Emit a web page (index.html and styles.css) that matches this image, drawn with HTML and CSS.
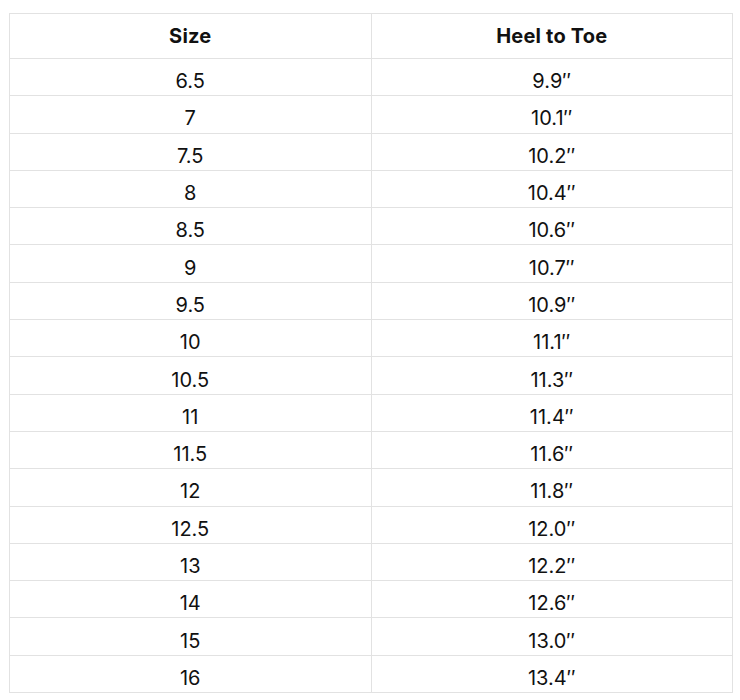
FILE: index.html
```html
<!DOCTYPE html>
<html>
<head>
<meta charset="utf-8">
<link rel="stylesheet" href="styles.css">
</head>
<body>
<table class="size-table">
  <thead>
    <tr><th>Size</th><th>Heel to Toe</th></tr>
  </thead>
  <tbody>
    <tr><td>6.5</td><td>9.9″</td></tr>
    <tr><td>7</td><td>10.1″</td></tr>
    <tr><td>7.5</td><td>10.2″</td></tr>
    <tr><td>8</td><td>10.4″</td></tr>
    <tr><td>8.5</td><td>10.6″</td></tr>
    <tr><td>9</td><td>10.7″</td></tr>
    <tr><td>9.5</td><td>10.9″</td></tr>
    <tr><td>10</td><td>11.1″</td></tr>
    <tr><td>10.5</td><td>11.3″</td></tr>
    <tr><td>11</td><td>11.4″</td></tr>
    <tr><td>11.5</td><td>11.6″</td></tr>
    <tr><td>12</td><td>11.8″</td></tr>
    <tr><td>12.5</td><td>12.0″</td></tr>
    <tr><td>13</td><td>12.2″</td></tr>
    <tr><td>14</td><td>12.6″</td></tr>
    <tr><td>15</td><td>13.0″</td></tr>
    <tr><td>16</td><td>13.4″</td></tr>
  </tbody>
</table>
</body>
</html>
```
FILE: styles.css
```css
html, body {
  margin: 0;
  padding: 0;
  background: #ffffff;
}
body {
  padding: 13px 0 0 9px;
  font-family: "Inter", "Liberation Sans", sans-serif;
  color: #111111;
}
.size-table {
  border-collapse: collapse;
  width: 724px;
  table-layout: fixed;
}
.size-table th,
.size-table td {
  border: 1px solid #e2e2e2;
  text-align: center;
  padding: 0;
  font-size: 20px;
  line-height: 24px;
}
.size-table th {
  height: 44px;
  font-weight: 700;
  letter-spacing: 0.2px;
}
.size-table td {
  height: 37.3px;
  box-sizing: border-box;
  padding-top: 8px;
  vertical-align: middle;
  font-weight: 400;
}
```
